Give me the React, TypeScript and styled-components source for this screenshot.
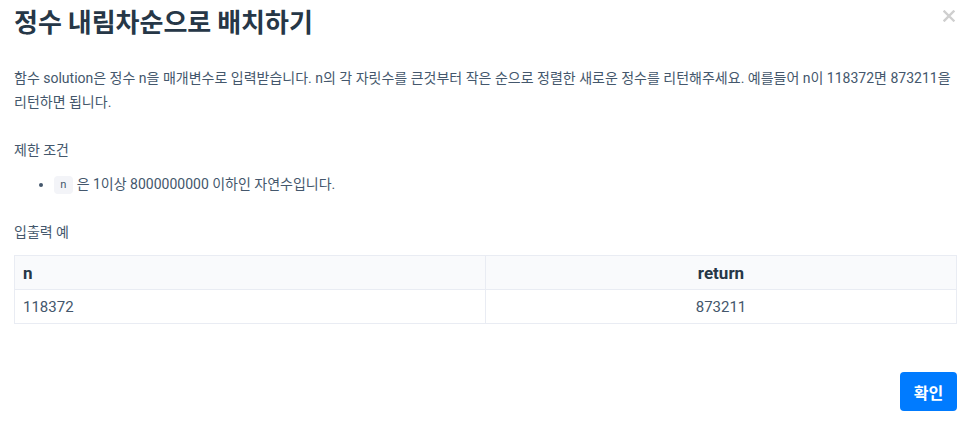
import styled, { createGlobalStyle } from 'styled-components';

const GlobalStyle = createGlobalStyle`
  html, body {
    margin: 0;
    padding: 0;
    background: #fff;
  }
  body {
    font-family: "Roboto", "Noto Sans CJK KR", sans-serif;
    color: #44576c;
  }
`;

const Modal = styled.div`
  position: relative;
  width: 971px;
  height: 421px;
  box-sizing: border-box;
  padding: 0 14px;
  display: flex;
  flex-direction: column;
`;

const CloseButton = styled.button`
  position: absolute;
  top: 7px;
  right: 13px;
  width: 18px;
  height: 18px;
  padding: 0;
  border: none;
  background: none;
  cursor: pointer;
  display: flex;
  align-items: center;
  justify-content: center;
`;

const Title = styled.h1`
  margin: 3px 0 0;
  font-family: "Noto Sans CJK KR", sans-serif;
  font-size: 26px;
  font-weight: 700;
  line-height: 36px;
  color: #263747;
`;

const Paragraph = styled.p`
  margin: 27px 0 0;
  font-size: 14px;
  line-height: 24px;
  color: #44576c;
`;

const SectionTitle = styled.h5`
  margin: 24px 0 0;
  font-size: 14px;
  font-weight: 400;
  line-height: 24px;
  color: #44576c;
`;

const List = styled.ul`
  margin: 10px 0 0;
  padding-left: 40px;
  font-size: 14px;
  line-height: 24px;
`;

const Code = styled.code`
  display: inline-block;
  padding: 0 6px;
  margin-right: 4px;
  font-family: "DejaVu Sans Mono", monospace;
  font-size: 11px;
  line-height: 18px;
  background: #f3f4f8;
  border-radius: 4px;
  color: #44576c;
  vertical-align: 1px;
`;

const Table = styled.table`
  margin-top: 11px;
  width: 100%;
  border-collapse: collapse;
  font-size: 15px;
`;

const Th = styled.th<{ $align?: string }>`
  height: 33px;
  padding: 0 8px;
  text-align: ${(p) => p.$align || 'left'};
  background: #f9fafc;
  border: 1px solid #e9ecf3;
  font-size: 17px;
  font-weight: 700;
  color: #263747;
  width: 50%;
`;

const Td = styled.td<{ $align?: string }>`
  height: 33px;
  padding: 0 8px;
  text-align: ${(p) => p.$align || 'left'};
  border: 1px solid #e9ecf3;
  color: #44576c;
`;

const Footer = styled.div`
  margin-top: auto;
  padding-bottom: 10px;
  display: flex;
  justify-content: flex-end;
`;

const ConfirmButton = styled.button`
  width: 57px;
  height: 39px;
  border: none;
  border-radius: 4px;
  background: #007bff;
  color: #fff;
  font-family: "Noto Sans CJK KR", sans-serif;
  font-size: 16px;
  font-weight: 700;
  cursor: pointer;
`;

export default function App() {
  return (
    <>
      <GlobalStyle />
      <Modal>
        <CloseButton aria-label="close">
          <svg width="12" height="12" viewBox="0 0 12 12">
            <path d="M1.5 1.5 L10.5 10.5 M10.5 1.5 L1.5 10.5" stroke="#cfcfcf" strokeWidth="2.4" strokeLinecap="square" />
          </svg>
        </CloseButton>
        <Title>정수 내림차순으로 배치하기</Title>
        <Paragraph>
          함수 solution은 정수 n을 매개변수로 입력받습니다. n의 각 자릿수를 큰것부터 작은 순으로 정렬한 새로운 정수를 리턴해주세요. 예를들어 n이 118372면 873211을 리턴하면 됩니다.
        </Paragraph>
        <SectionTitle>제한 조건</SectionTitle>
        <List>
          <li>
            <Code>n</Code>은 1이상 8000000000 이하인 자연수입니다.
          </li>
        </List>
        <SectionTitle>입출력 예</SectionTitle>
        <Table>
          <thead>
            <tr>
              <Th>n</Th>
              <Th $align="center">return</Th>
            </tr>
          </thead>
          <tbody>
            <tr>
              <Td>118372</Td>
              <Td $align="center">873211</Td>
            </tr>
          </tbody>
        </Table>
        <Footer>
          <ConfirmButton>확인</ConfirmButton>
        </Footer>
      </Modal>
    </>
  );
}
